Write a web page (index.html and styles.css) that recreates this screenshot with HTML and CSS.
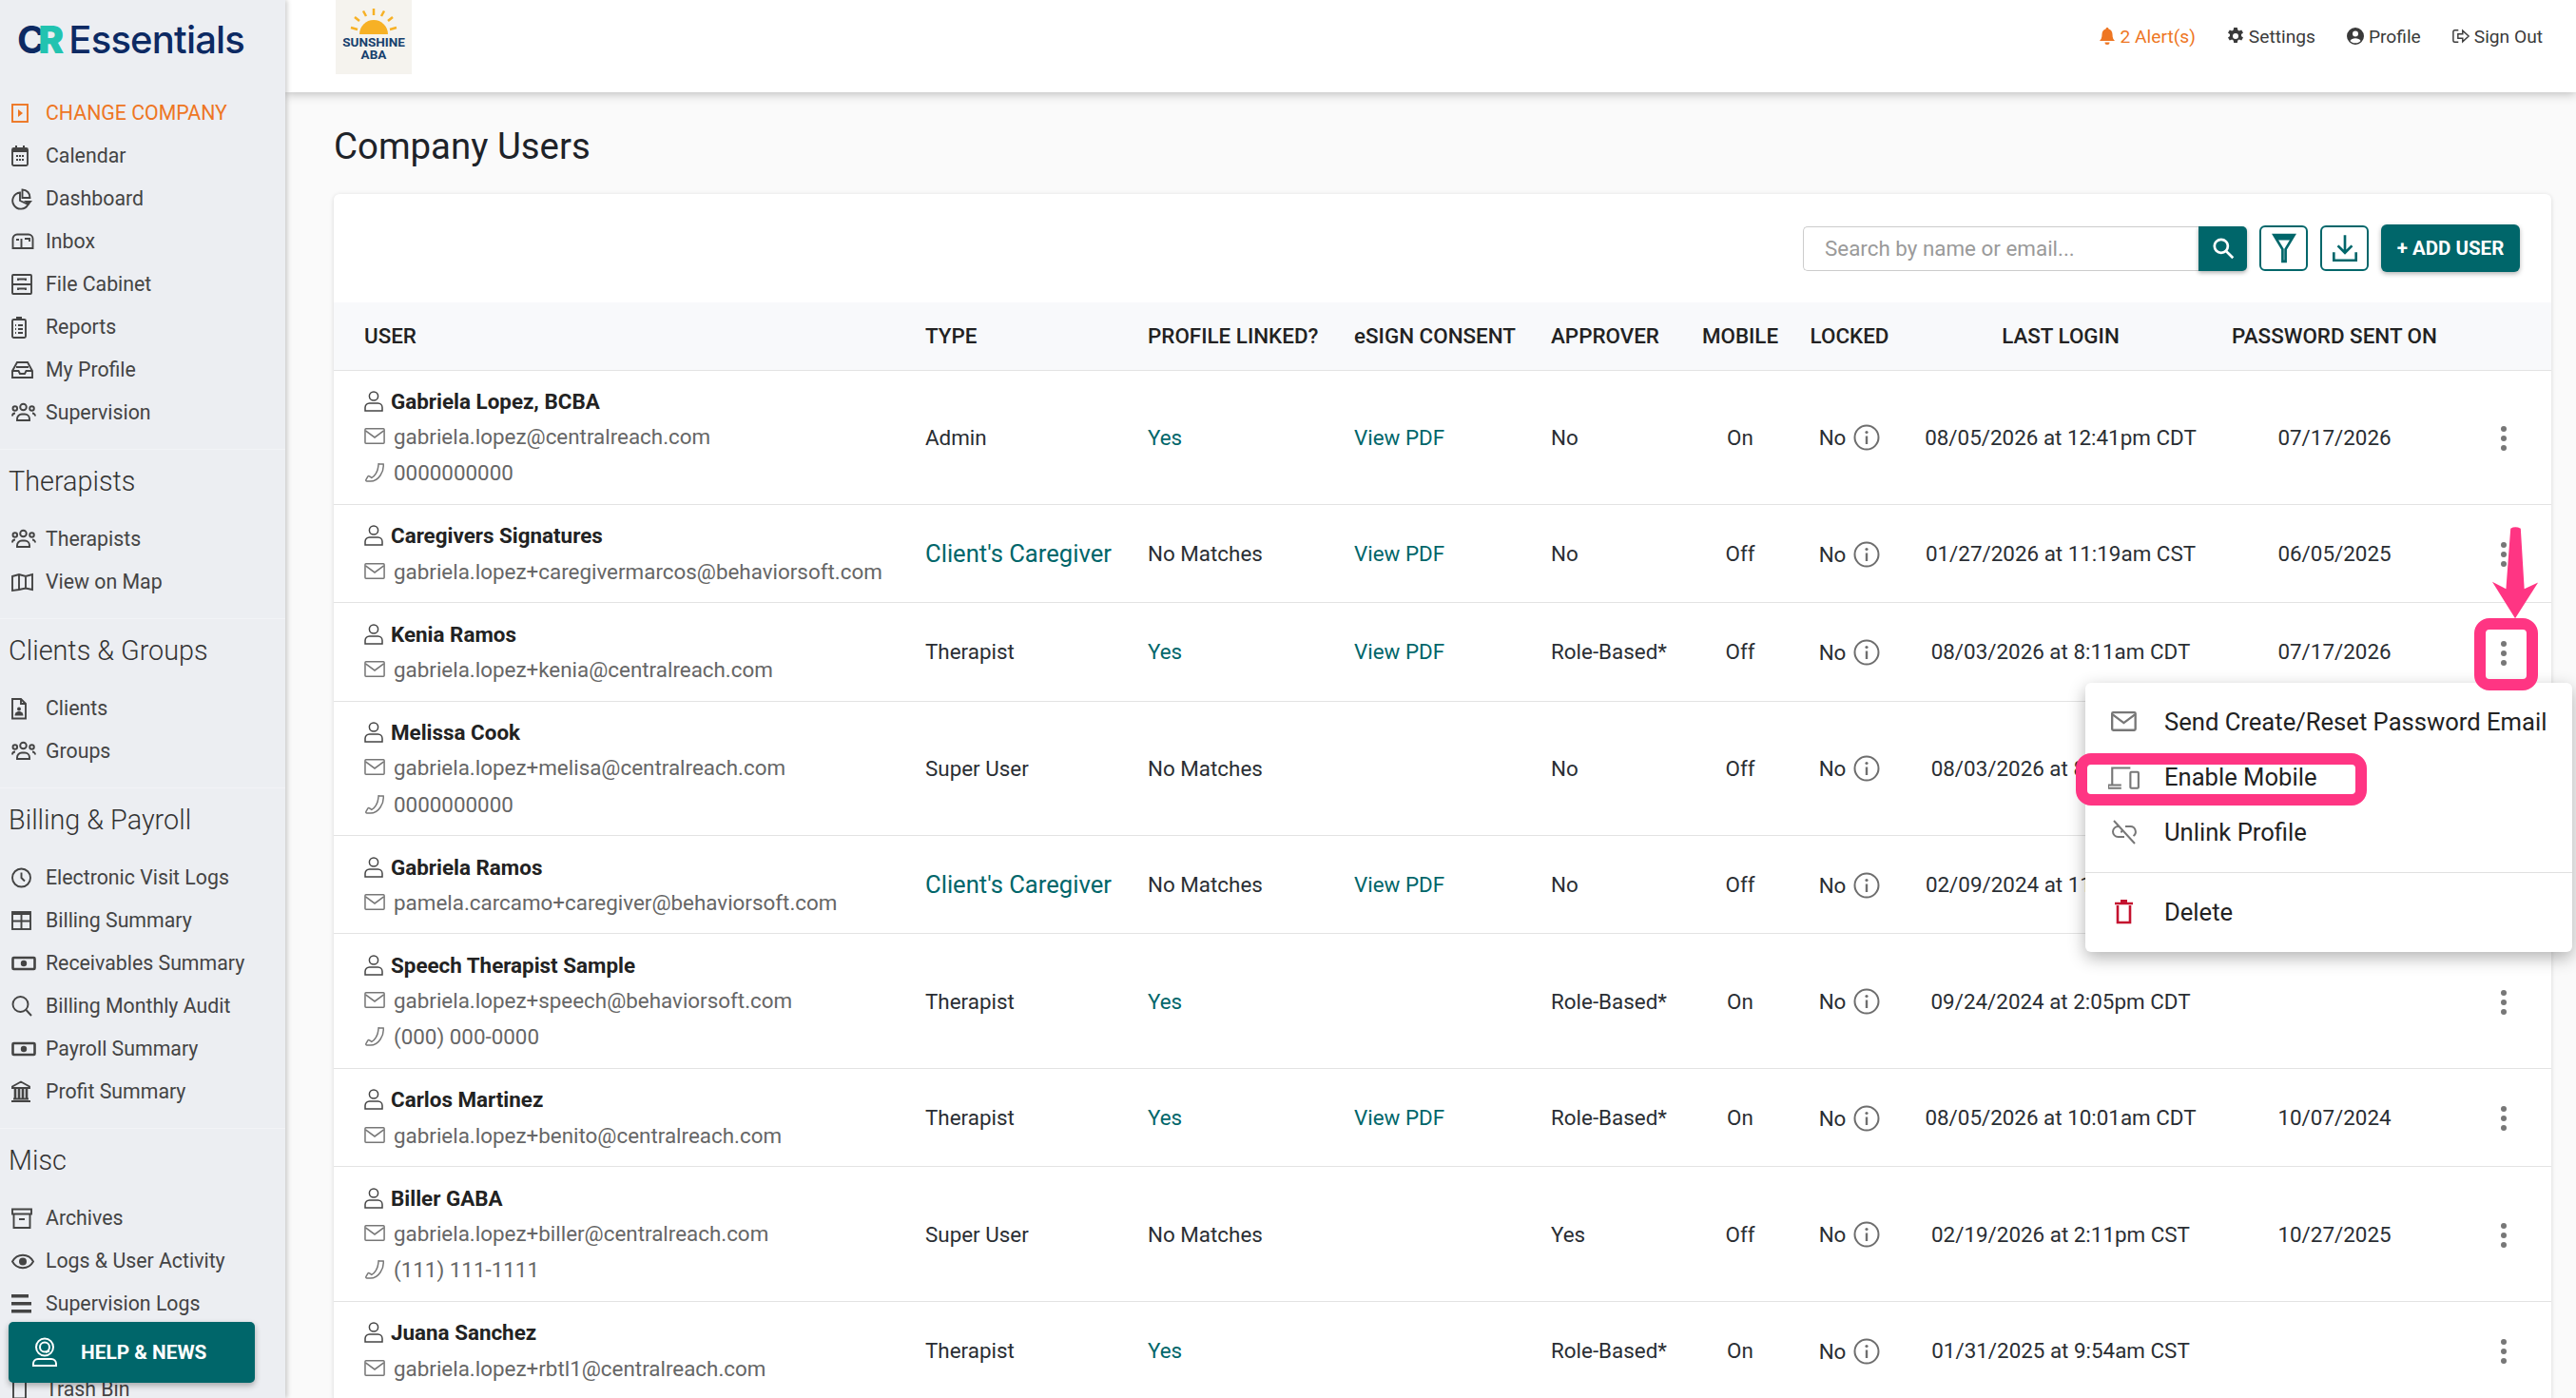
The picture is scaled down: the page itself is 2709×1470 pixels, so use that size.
FILE: index.html
```html
<!DOCTYPE html>
<html>
<head>
  <title>Company Users</title>
  <link rel="stylesheet" href="styles.css">
</head>
<body>
  <!-- Icon sprite -->
  <svg class="sprite">
    <symbol id="i-change" viewBox="0 0 26 24"><rect x="1" y="3" width="16" height="18"/><path class="solid" d="M7 8l5 4-5 4z"/></symbol>
    <symbol id="i-calendar" viewBox="0 0 26 24"><rect x="1" y="4" width="16" height="18" rx="1.5"/><path class="solid" d="M1 4h16v4H1zM4 1h2v4H4zM12 1h2v4h-2zM5 11h2v2H5zM8 11h2v2H8zM11 11h2v2h-2zM5 15h2v2H5zM8 15h2v2H8zM11 15h2v2h-2z"/></symbol>
    <symbol id="i-pie" viewBox="0 0 26 24"><path d="M9 5.500a8.600 8.600 0 1 0 8.500 12.500l-8.500-4z"/><path d="M11.500 2.500a8 8 0 0 1 8 8.500h-8z"/><path class="solid" d="M13 14h9l-4 5z"/></symbol>
    <symbol id="i-mailbox" viewBox="0 0 26 24"><path d="M6 4.500h12a4.500 4.500 0 0 1 4.500 4.500v10H1.500V9A4.500 4.500 0 0 1 6 4.500zM10.500 9v10M5 10h3M14 9h5v3"/></symbol>
    <symbol id="i-cabinet" viewBox="0 0 26 24"><rect x="1" y="2" width="20" height="20" rx="1"/><path d="M1 12h20M7 8V6.500h8V8M7 18v-1.500h8V18"/></symbol>
    <symbol id="i-clipboard" viewBox="0 0 26 24"><rect x="1" y="4" width="14" height="19" rx="1.500"/><path class="solid" d="M5 1h6v4H5z"/><path d="M4 10h1M7 10h5M4 14h1M7 14h5M4 18h1M7 18h5"/></symbol>
    <symbol id="i-inbox" viewBox="0 0 26 24"><path d="M1 13l5-9h11l5 9v7H1zM1 13h6.500l1.500 3h5l1.500-3H22M5 9h13"/></symbol>
    <symbol id="i-people" viewBox="0 0 26 24"><circle cx="12.500" cy="6" r="3.300"/><circle cx="3.800" cy="7.500" r="2.300"/><circle cx="21.500" cy="7.500" r="2.300"/><path d="M6 20v-1.500a5 5 0 0 1 5-5h3a5 5 0 0 1 5 5V20zM1 15.500a3 3 0 0 1 3-3M25 15.500a3 3 0 0 0-3-3"/></symbol>
    <symbol id="i-map" viewBox="0 0 26 24"><path d="M1 6l7-2 7 2 7-2v16l-7-1.500L8 20l-7 1zM8 4v16M15 6v13"/></symbol>
    <symbol id="i-client" viewBox="0 0 26 24"><path d="M1 2h9l5 5v15.500H1zM10 2v5h5"/><circle class="solid" cx="8" cy="12.500" r="2"/><path class="solid" d="M3.500 19.500a4.500 4.500 0 0 1 9 0z"/></symbol>
    <symbol id="i-clock" viewBox="0 0 26 24"><circle cx="10.500" cy="12" r="9.500"/><path d="M10.500 6.500V12l3.500 3.500"/></symbol>
    <symbol id="i-grid" viewBox="0 0 26 24"><rect x="1" y="3" width="19" height="18"/><path class="solid" d="M1 3h19v3H1z"/><path d="M1 12.500h19M10.500 5v16"/></symbol>
    <symbol id="i-cash" viewBox="0 0 26 24"><rect class="thick" x="1.500" y="6" width="23" height="12" rx="1"/><circle class="solid" cx="13" cy="12" r="3.200"/></symbol>
    <symbol id="i-search" viewBox="0 0 26 24"><circle cx="9.500" cy="10" r="8"/><path d="M15.500 16l5.500 6"/></symbol>
    <symbol id="i-bank" viewBox="0 0 26 24"><path d="M10 1.500L1 6.500V8h18V6.500z"/><path class="thick" d="M4 9v10M8 9v10M12 9v10M16 9v10"/><path d="M2 19.500h16M0 22h20"/></symbol>
    <symbol id="i-archive" viewBox="0 0 26 24"><path d="M1 2.500h20v5H1zM2.500 7.500V22h17V7.500M8 13h6"/></symbol>
    <symbol id="i-eye" viewBox="0 0 26 24"><path d="M1 12.500c5-9 17-9 22 0-5 9-17 9-22 0z"/><circle class="solid" cx="12" cy="12.500" r="4"/></symbol>
    <symbol id="i-bars" viewBox="0 0 26 24"><path class="solid" d="M0 2h18v3.500H0zM0 10h21v3.500H0zM0 18h21v3.500H0z"/></symbol>
    <symbol id="i-bin" viewBox="0 0 26 24"><path d="M2 1v20.500h13V1"/></symbol>
    <symbol id="i-user" viewBox="0 0 20 22"><circle cx="10" cy="5.500" r="4.600"/><path d="M5.500 13h9a4.500 4.500 0 0 1 4.500 4.500V21H1v-3.500A4.500 4.500 0 0 1 5.500 13z"/></symbol>
    <symbol id="i-mail" viewBox="0 0 24 20"><rect x="1" y="1.500" width="21" height="16" rx="1"/><path d="M1.500 3.500L11.500 11l10-7.500"/></symbol>
    <symbol id="i-phone" viewBox="0 0 24 22"><path d="M16.500 1h5c1 8-5 20-15 20H2.500c-1 0-1.500-1-1-2l2-3.500c.5-.7 1.500-.7 2.500 0l2 1.500c4-2 7-8 7.500-12.500l.5-4z"/></symbol>
    <symbol id="i-info" viewBox="0 0 28 28"><circle cx="14" cy="14" r="12.500"/><circle class="solid" cx="14" cy="8.500" r="1.600"/><path class="solid" d="M12.800 12.500h2.400V21h-2.400z"/></symbol>
    <symbol id="i-laptop" viewBox="0 0 32 24"><path d="M4 19V3h18M13 20H0v3h13"/><rect x="22" y="7" width="8" height="16" rx="1"/></symbol>
    <symbol id="i-unlink" viewBox="0 0 26 26"><path d="M8 7H6.500a5.500 5.500 0 0 0 0 11H13M14 7h5.500a5.500 5.500 0 0 1 3 10M9 12.500h2M2 1l22 24"/></symbol>
    <symbol id="i-trash" viewBox="0 0 20 26"><path class="thick" d="M3 6v18h13V6M0 4h19"/><path class="solid" d="M6 0h7v3H6z"/></symbol>
  </svg>

  <aside class="sidebar">
    <div class="brand">
      <span class="brand-cr">C<b>R</b></span><span class="brand-name">Essentials</span>
    </div>

    <div class="nav-group">
      <a class="nav-item orange"><svg class="ic"><use href="#i-change"/></svg>CHANGE COMPANY</a>
      <a class="nav-item"><svg class="ic"><use href="#i-calendar"/></svg>Calendar</a>
      <a class="nav-item"><svg class="ic"><use href="#i-pie"/></svg>Dashboard</a>
      <a class="nav-item"><svg class="ic"><use href="#i-mailbox"/></svg>Inbox</a>
      <a class="nav-item"><svg class="ic"><use href="#i-cabinet"/></svg>File Cabinet</a>
      <a class="nav-item"><svg class="ic"><use href="#i-clipboard"/></svg>Reports</a>
      <a class="nav-item"><svg class="ic"><use href="#i-inbox"/></svg>My Profile</a>
      <a class="nav-item"><svg class="ic"><use href="#i-people"/></svg>Supervision</a>
    </div>

    <div class="nav-group">
      <h4>Therapists</h4>
      <a class="nav-item"><svg class="ic"><use href="#i-people"/></svg>Therapists</a>
      <a class="nav-item"><svg class="ic"><use href="#i-map"/></svg>View on Map</a>
    </div>

    <div class="nav-group">
      <h4>Clients &amp; Groups</h4>
      <a class="nav-item"><svg class="ic"><use href="#i-client"/></svg>Clients</a>
      <a class="nav-item"><svg class="ic"><use href="#i-people"/></svg>Groups</a>
    </div>

    <div class="nav-group">
      <h4>Billing &amp; Payroll</h4>
      <a class="nav-item"><svg class="ic"><use href="#i-clock"/></svg>Electronic Visit Logs</a>
      <a class="nav-item"><svg class="ic"><use href="#i-grid"/></svg>Billing Summary</a>
      <a class="nav-item"><svg class="ic"><use href="#i-cash"/></svg>Receivables Summary</a>
      <a class="nav-item"><svg class="ic"><use href="#i-search"/></svg>Billing Monthly Audit</a>
      <a class="nav-item"><svg class="ic"><use href="#i-cash"/></svg>Payroll Summary</a>
      <a class="nav-item"><svg class="ic"><use href="#i-bank"/></svg>Profit Summary</a>
    </div>

    <div class="nav-group">
      <h4>Misc</h4>
      <a class="nav-item"><svg class="ic"><use href="#i-archive"/></svg>Archives</a>
      <a class="nav-item"><svg class="ic"><use href="#i-eye"/></svg>Logs &amp; User Activity</a>
      <a class="nav-item"><svg class="ic"><use href="#i-bars"/></svg>Supervision Logs</a>
      <a class="nav-item nav-gap"><svg class="ic"><use href="#i-bin"/></svg>Trash Bin</a>
    </div>

    <a class="help-btn">
      <svg class="help-ic" viewBox="0 0 28 32"><circle cx="14" cy="10.500" r="9"/><circle cx="14" cy="10.500" r="5"/><path d="M19 14.500l-4 1.500M2 30v-2a5 5 0 0 1 5-5h14a5 5 0 0 1 5 5v2z"/></svg>
      HELP &amp; NEWS
    </a>
  </aside>

  <div class="main">
    <header class="topbar">
      <div class="client-logo">
        <svg class="sun" viewBox="0 0 48 28">
          <path class="sun-disc" d="M9 27a15 15 0 0 1 30 0z"/>
          <path class="sun-rays" d="M24 0v7M13 2.500l3 5.500M35 2.500l-3 5.500M4 9l5 4M44 9l-5 4M0 20l7 2M48 20l-7 2"/>
        </svg>
        <span>SUNSHINE</span>
        <span>ABA</span>
      </div>
      <nav class="top-links">
        <a class="orange"><svg viewBox="0 0 16 18"><path d="M8 0c1 0 1.500.7 1.500 1.500C12 2.200 13.500 4.500 13.500 7c0 4 1 5.500 2.500 7H0c1.500-1.500 2.500-3 2.500-7 0-2.500 1.500-4.800 4-5.500C6.500.7 7 0 8 0zM5.500 15.500h5a2.500 2.500 0 0 1-5 0z"/></svg>2 Alert(s)</a>
        <a><svg viewBox="0 0 18 18"><path fill-rule="evenodd" d="M7.200 0h3.600l.5 2.600 1.500.8 2.400-1 1.800 3-2 1.700v1.800l2 1.700-1.800 3-2.400-1-1.500.8-.5 2.600H7.200l-.5-2.600-1.500-.8-2.400 1-1.800-3 2-1.700V7.100l-2-1.700 1.800-3 2.400 1 1.500-.8zM9 6a3 3 0 1 0 0 6 3 3 0 0 0 0-6z"/></svg>Settings</a>
        <a><svg viewBox="0 0 18 18"><path fill-rule="evenodd" d="M9 0a9 9 0 1 1 0 18A9 9 0 0 1 9 0zm0 3.500a3 3 0 1 0 0 6 3 3 0 0 0 0-6zM3.500 14c1.200 1.500 3.300 2.300 5.500 2.300s4.300-.8 5.500-2.300c-.8-1.800-3-2.800-5.500-2.800s-4.700 1-5.500 2.800z"/></svg>Profile</a>
        <a><svg class="outline" viewBox="0 0 20 18"><path d="M7 2H3a2 2 0 0 0-2 2v10a2 2 0 0 0 2 2h4M6.500 6.500H12V2.500L19 9l-7 6.500v-4H6.500z"/></svg>Sign Out</a>
      </nav>
    </header>

    <div class="content">
      <h1>Company Users</h1>

      <div class="card">
        <div class="toolbar">
          <div class="search">
            <input type="text" placeholder="Search by name or email...">
            <button class="search-btn"><svg class="tool-ic" viewBox="0 0 24 24"><circle cx="10" cy="10" r="6.500"/><path d="M15 15l6.500 6.500"/></svg></button>
          </div>
          <button class="tool-btn"><svg class="tool-ic teal" viewBox="0 0 26 32"><path d="M3 3h20L14.500 17v12h-3V17z"/><path class="solid" d="M3 3h20l-3 5H6z"/></svg></button>
          <button class="tool-btn"><svg class="tool-ic teal" viewBox="0 0 28 32"><path d="M14 3v17M7 13.500l7 7 7-7M3 20v8h22v-8"/></svg></button>
          <button class="add-btn">+ ADD USER</button>
        </div>

        <table>
          <colgroup>
            <col class="c-user"><col class="c-type"><col class="c-linked"><col class="c-consent"><col class="c-approver">
            <col class="c-mobile"><col class="c-locked"><col class="c-login"><col class="c-sent"><col class="c-menu">
          </colgroup>
          <thead>
            <tr>
              <th>USER</th><th>TYPE</th><th>PROFILE LINKED?</th><th>eSIGN CONSENT</th><th>APPROVER</th>
              <th class="mid">MOBILE</th><th class="mid">LOCKED</th><th class="mid">LAST LOGIN</th><th class="mid">PASSWORD SENT ON</th><th></th>
            </tr>
          </thead>
          <tbody>
            <tr>
              <td class="user"><div class="name"><svg class="ic-name"><use href="#i-user"/></svg>Gabriela Lopez, BCBA</div><div class="sub"><svg class="ic-u"><use href="#i-mail"/></svg>gabriela.lopez@centralreach.com</div><div class="sub"><svg class="ic-u"><use href="#i-phone"/></svg>0000000000</div></td>
              <td>Admin</td><td class="link">Yes</td><td class="link">View PDF</td><td>No</td>
              <td class="mid">On</td><td class="mid"><span class="locked">No<svg class="ic-info"><use href="#i-info"/></svg></span></td><td class="mid">08/05/2026 at 12:41pm CDT</td><td class="mid">07/17/2026</td><td class="mid"><span class="kebab"><i></i><i></i><i></i></span></td>
            </tr>
            <tr>
              <td class="user"><div class="name"><svg class="ic-name"><use href="#i-user"/></svg>Caregivers Signatures</div><div class="sub"><svg class="ic-u"><use href="#i-mail"/></svg>gabriela.lopez+caregivermarcos@behaviorsoft.com</div></td>
              <td class="link big">Client's Caregiver</td><td>No Matches</td><td class="link">View PDF</td><td>No</td>
              <td class="mid">Off</td><td class="mid"><span class="locked">No<svg class="ic-info"><use href="#i-info"/></svg></span></td><td class="mid">01/27/2026 at 11:19am CST</td><td class="mid">06/05/2025</td><td class="mid"><span class="kebab"><i></i><i></i><i></i></span></td>
            </tr>
            <tr>
              <td class="user"><div class="name"><svg class="ic-name"><use href="#i-user"/></svg>Kenia Ramos</div><div class="sub"><svg class="ic-u"><use href="#i-mail"/></svg>gabriela.lopez+kenia@centralreach.com</div></td>
              <td>Therapist</td><td class="link">Yes</td><td class="link">View PDF</td><td>Role-Based*</td>
              <td class="mid">Off</td><td class="mid"><span class="locked">No<svg class="ic-info"><use href="#i-info"/></svg></span></td><td class="mid">08/03/2026 at 8:11am CDT</td><td class="mid">07/17/2026</td><td class="mid"><span class="kebab"><i></i><i></i><i></i></span></td>
            </tr>
            <tr>
              <td class="user"><div class="name"><svg class="ic-name"><use href="#i-user"/></svg>Melissa Cook</div><div class="sub"><svg class="ic-u"><use href="#i-mail"/></svg>gabriela.lopez+melisa@centralreach.com</div><div class="sub"><svg class="ic-u"><use href="#i-phone"/></svg>0000000000</div></td>
              <td>Super User</td><td>No Matches</td><td></td><td>No</td>
              <td class="mid">Off</td><td class="mid"><span class="locked">No<svg class="ic-info"><use href="#i-info"/></svg></span></td><td class="mid">08/03/2026 at 8:11am CDT</td><td class="mid"></td><td class="mid"></td>
            </tr>
            <tr>
              <td class="user"><div class="name"><svg class="ic-name"><use href="#i-user"/></svg>Gabriela Ramos</div><div class="sub"><svg class="ic-u"><use href="#i-mail"/></svg>pamela.carcamo+caregiver@behaviorsoft.com</div></td>
              <td class="link big">Client's Caregiver</td><td>No Matches</td><td class="link">View PDF</td><td>No</td>
              <td class="mid">Off</td><td class="mid"><span class="locked">No<svg class="ic-info"><use href="#i-info"/></svg></span></td><td class="mid">02/09/2024 at 11:02am CST</td><td class="mid"></td><td class="mid"></td>
            </tr>
            <tr>
              <td class="user"><div class="name"><svg class="ic-name"><use href="#i-user"/></svg>Speech Therapist Sample</div><div class="sub"><svg class="ic-u"><use href="#i-mail"/></svg>gabriela.lopez+speech@behaviorsoft.com</div><div class="sub"><svg class="ic-u"><use href="#i-phone"/></svg>(000) 000-0000</div></td>
              <td>Therapist</td><td class="link">Yes</td><td></td><td>Role-Based*</td>
              <td class="mid">On</td><td class="mid"><span class="locked">No<svg class="ic-info"><use href="#i-info"/></svg></span></td><td class="mid">09/24/2024 at 2:05pm CDT</td><td class="mid"></td><td class="mid"><span class="kebab"><i></i><i></i><i></i></span></td>
            </tr>
            <tr>
              <td class="user"><div class="name"><svg class="ic-name"><use href="#i-user"/></svg>Carlos Martinez</div><div class="sub"><svg class="ic-u"><use href="#i-mail"/></svg>gabriela.lopez+benito@centralreach.com</div></td>
              <td>Therapist</td><td class="link">Yes</td><td class="link">View PDF</td><td>Role-Based*</td>
              <td class="mid">On</td><td class="mid"><span class="locked">No<svg class="ic-info"><use href="#i-info"/></svg></span></td><td class="mid">08/05/2026 at 10:01am CDT</td><td class="mid">10/07/2024</td><td class="mid"><span class="kebab"><i></i><i></i><i></i></span></td>
            </tr>
            <tr>
              <td class="user"><div class="name"><svg class="ic-name"><use href="#i-user"/></svg>Biller GABA</div><div class="sub"><svg class="ic-u"><use href="#i-mail"/></svg>gabriela.lopez+biller@centralreach.com</div><div class="sub"><svg class="ic-u"><use href="#i-phone"/></svg>(111) 111-1111</div></td>
              <td>Super User</td><td>No Matches</td><td></td><td>Yes</td>
              <td class="mid">Off</td><td class="mid"><span class="locked">No<svg class="ic-info"><use href="#i-info"/></svg></span></td><td class="mid">02/19/2026 at 2:11pm CST</td><td class="mid">10/27/2025</td><td class="mid"><span class="kebab"><i></i><i></i><i></i></span></td>
            </tr>
            <tr>
              <td class="user"><div class="name"><svg class="ic-name"><use href="#i-user"/></svg>Juana Sanchez</div><div class="sub"><svg class="ic-u"><use href="#i-mail"/></svg>gabriela.lopez+rbtl1@centralreach.com</div></td>
              <td>Therapist</td><td class="link">Yes</td><td></td><td>Role-Based*</td>
              <td class="mid">On</td><td class="mid"><span class="locked">No<svg class="ic-info"><use href="#i-info"/></svg></span></td><td class="mid">01/31/2025 at 9:54am CST</td><td class="mid"></td><td class="mid"><span class="kebab"><i></i><i></i><i></i></span></td>
            </tr>
          </tbody>
        </table>
      </div>
    </div>
  </div>

  <!-- Row action menu -->
  <div class="menu">
    <div class="menu-item"><svg class="menu-ic"><use href="#i-mail"/></svg>Send Create/Reset Password Email</div>
    <div class="menu-item"><svg class="menu-ic wide"><use href="#i-laptop"/></svg>Enable Mobile</div>
    <div class="menu-item"><svg class="menu-ic"><use href="#i-unlink"/></svg>Unlink Profile</div>
    <div class="menu-sep"></div>
    <div class="menu-item"><svg class="menu-ic red"><use href="#i-trash"/></svg>Delete</div>
  </div>

  <!-- Pink callouts drawn on top of the screenshot -->
  <div class="callout callout-kebab"></div>
  <div class="callout callout-mobile"></div>
  <svg class="callout-arrow" viewBox="0 0 54 100"><path d="M21 2q5-3 11 0l4 66 15-7-25 39L1 60l15 8z"/></svg>
</body>
</html>
```

FILE: styles.css
```css
html, body { margin: 0; height: 1470px; overflow: hidden; }
body { position: relative; display: flex; background: #fafafa; font-family: Roboto, "Liberation Sans", sans-serif; color: #2a2e33; }
.sprite { display: none; }
svg { overflow: visible; }
.solid { fill: currentColor; stroke: none; }
.thick { stroke-width: 2.6; }
.orange { color: #ee7623 !important; }

/* Sidebar */
.sidebar { position: relative; z-index: 2; flex: 0 0 300px; height: 1470px; overflow: hidden; background: #eceef2; box-shadow: 2px 0 5px rgba(0,0,0,.2); }
.brand { height: 96px; display: flex; align-items: center; padding: 0 0 14px 18px; box-sizing: border-box; color: #0d2a63; font-size: 40px; font-weight: 500; letter-spacing: -.8px; font-family: Inter, Roboto, sans-serif; }
.brand-cr { font-weight: 700; font-size: 40px; letter-spacing: -7px; margin-right: 12px; }
.brand-cr b { color: #22c3b0; }
.nav-group { padding-bottom: 16px; border-bottom: 1px solid #f2f3f6; }
.nav-group h4 { margin: 0; height: 71px; padding: 14px 0 0 9px; box-sizing: border-box; font-weight: 300; font-size: 28.8px; line-height: 38px; color: #333; }
.nav-item { display: flex; align-items: center; height: 45px; padding-left: 12px; font-size: 21.3px; color: #444; }
.nav-item .ic { flex: 0 0 26px; width: 26px; height: 24px; margin-right: 10px; fill: none; stroke: currentColor; stroke-width: 1.9; }
.nav-gap { margin-top: 45px; }
.help-btn { position: absolute; left: 9px; top: 1390px; width: 259px; height: 64px; box-sizing: border-box; display: flex; align-items: center; padding-left: 24px; background: #00666a; border-radius: 5px; color: #fff; font-weight: 700; font-size: 20.8px; box-shadow: 0 3px 6px rgba(0,0,0,.3); }
.help-ic { width: 28px; height: 32px; margin-right: 24px; fill: none; stroke: #fff; stroke-width: 2; }

/* Top bar */
.main { flex: 1; min-width: 0; }
.topbar { height: 97px; display: flex; justify-content: space-between; background: #fff; box-shadow: 0 2px 10px rgba(0,0,0,.25); padding: 0 35px 0 53px; box-sizing: border-box; }
.client-logo { width: 80px; height: 78px; background: #f5f3ee; display: flex; flex-direction: column; align-items: center; color: #17406d; font-weight: 700; font-size: 13.5px; line-height: 13px; }
.sun { width: 48px; height: 28px; margin: 9px 0 1px; }
.sun-disc { fill: #f7b125; }
.sun-rays { fill: none; stroke: #f7b125; stroke-width: 2.5; }
.top-links { display: flex; align-items: center; gap: 33px; height: 76px; font-size: 19.2px; color: #3a3a3a; }
.top-links a { display: flex; align-items: center; gap: 5px; }
.top-links svg { width: 18px; height: 18px; fill: currentColor; }
.top-links svg.outline { fill: none; stroke: currentColor; stroke-width: 1.6; }

/* Card and toolbar */
.content { padding: 32px 26px 0 51px; }
h1 { margin: 0 0 25px; font-weight: 400; font-size: 38.4px; line-height: 50px; color: #1e2329; }
.card { background: #fff; border-radius: 6px 6px 0 0; box-shadow: 0 1px 5px rgba(0,0,0,.14); }
.toolbar { height: 114px; display: flex; align-items: center; justify-content: flex-end; padding-right: 33px; gap: 13px; }
.search { display: flex; height: 47px; }
.search input { width: 416px; box-sizing: border-box; border: 1px solid #ccc; border-right: none; border-radius: 5px 0 0 5px; padding: 0 22px; font: 22.4px Roboto, sans-serif; color: #333; }
.search input::placeholder { color: #9a9a9a; }
.search-btn { width: 51px; border: none; background: #00666a; border-radius: 0 5px 5px 0; padding: 0; box-shadow: 0 2px 4px rgba(0,0,0,.3); }
.tool-ic { width: 26px; height: 26px; fill: none; stroke: #fff; stroke-width: 2.5; vertical-align: middle; }
.tool-ic.teal { color: #00666a; stroke: #00666a; width: 30px; height: 34px; }
.tool-btn { width: 51px; height: 48px; padding: 0; background: #fff; border: 2px solid #00666a; border-radius: 6px; }
.add-btn { width: 146px; height: 50px; border: none; border-radius: 6px; background: #00666a; color: #fff; font: 700 20.5px Roboto, sans-serif; box-shadow: 0 2px 5px rgba(0,0,0,.3); }

/* Table */
table { width: 2332px; table-layout: fixed; border-collapse: collapse; font-size: 22.4px; color: #2a2e33; }
.c-user { width: 622px; } .c-type { width: 234px; } .c-linked { width: 217px; } .c-consent { width: 207px; } .c-approver { width: 149px; }
.c-mobile { width: 100px; } .c-locked { width: 130px; } .c-login { width: 314px; } .c-sent { width: 262px; } .c-menu { width: 97px; }
th { height: 71px; padding: 0; text-align: left; font-weight: 500; font-size: 22.4px; color: #222; background: #f8f9fb; border-bottom: 1px solid #e3e3e3; box-sizing: border-box; white-space: nowrap; }
td { padding: 0; border-bottom: 1px solid #e3e3e3; white-space: nowrap; }
th:first-child, td.user { padding-left: 32px; }
.mid { text-align: center; }
.link { color: #00666a; }
.big { font-size: 25.6px; }
td.user { padding-top: 13.5px; padding-bottom: 13.5px; }
.name, .sub { display: flex; align-items: center; height: 37.6px; }
.sub + .sub { height: 38.5px; }
.name { font-weight: 700; color: #222; }
.sub { color: #666; }
.ic-name { width: 20px; height: 22px; margin-right: 8px; fill: none; stroke: #444; stroke-width: 1.5; }
.ic-u { width: 23px; height: 20px; margin-right: 8px; fill: none; stroke: #777; stroke-width: 1.6; }
.locked { display: inline-flex; align-items: center; gap: 8px; vertical-align: middle; }
.ic-info { width: 28px; height: 28px; fill: none; stroke: #6e6e6e; stroke-width: 2; color: #6e6e6e; }
.kebab { display: inline-flex; flex-direction: column; gap: 4px; margin-right: 3px; vertical-align: middle; }
.kebab i { width: 6px; height: 6px; border-radius: 50%; background: #777; }

/* Row action menu */
.menu { position: absolute; z-index: 3; left: 2193px; top: 718px; width: 512px; height: 283px; box-sizing: border-box; padding-top: 12px; background: #fff; border-radius: 6px; box-shadow: 0 6px 18px rgba(0,0,0,.3); color: #222; }
.menu-item { display: flex; align-items: center; height: 58px; padding-left: 27px; font-size: 25.6px; }
.menu-ic { width: 28px; height: 26px; margin-right: 28px; fill: none; stroke: #777; stroke-width: 2; color: #777; }
.menu-ic.wide { width: 34px; margin: 0 25px 0 -3px; }
.menu-ic.red { stroke: #c4122f; color: #c4122f; }
.menu-sep { height: 1px; margin: 13px 0 12px; background: #e0e0e0; }

/* Pink callouts */
.callout { position: absolute; z-index: 4; box-sizing: border-box; border: 12px solid #ff3583; border-radius: 16px; }
.callout-kebab { left: 2602px; top: 650px; width: 67px; height: 76px; }
.callout-mobile { left: 2183px; top: 792px; width: 306px; height: 55px; }
.callout-arrow { position: absolute; z-index: 4; left: 2620px; top: 553px; width: 52px; height: 98px; fill: #ff3583; }
```
